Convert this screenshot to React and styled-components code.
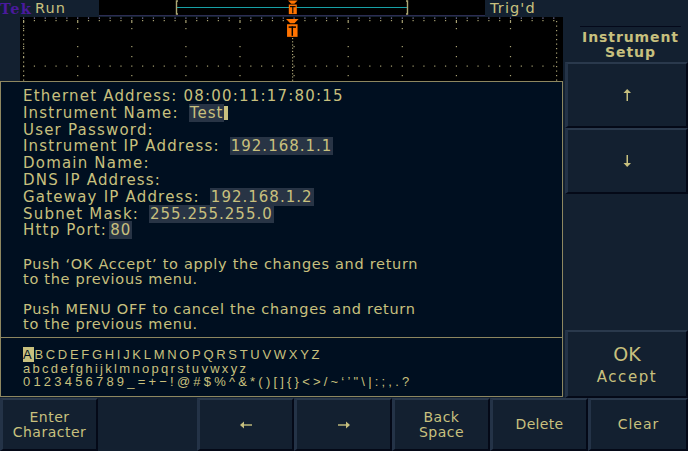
import styled, { createGlobalStyle } from "styled-components";

const KHAKI = "#c8c07e";
const BG = "#132030";
const PANEL = "#000f20";

const Global = createGlobalStyle`
  html, body { margin: 0; padding: 0; background: ${BG}; }
  body { font-family: "DejaVu Sans", sans-serif; }
`;

const Screen = styled.div`
  width: 688px;
  height: 451px;
  background: ${BG};
  display: flex;
  flex-direction: column;
  overflow: hidden;
  color: ${KHAKI};
`;

const Upper = styled.div`
  display: flex;
  height: 398px;
`;

const MainCol = styled.div`
  width: 565px;
  display: flex;
  flex-direction: column;
`;

const TopBar = styled.div`
  height: 17px;
  display: flex;
  align-items: center;
  position: relative;
  z-index: 1;
`;

const Brand = styled.div`
  width: 99px;
  display: flex;
  align-items: center;
  gap: 3px;
`;

const Tek = styled.span`
  font-family: "DejaVu Serif", serif;
  font-weight: bold;
  font-size: 14.5px;
  color: #4a1a9c;
  letter-spacing: 1.2px;
  line-height: 17px;
`;

const Status = styled.span`
  font-size: 14.5px;
  line-height: 17px;
  margin-left: ${(p) => p.$ml || 0}px;
  letter-spacing: 1.1px;
`;

const RecordView = styled.div`
  width: 386px;
  height: 15px;
  background: #000;
  border-bottom: 1px solid #2c2c52;
  position: relative;
  align-self: flex-start;
`;

const Graticule = styled.div`
  margin-left: 20px;
  width: 543px;
  height: 64px;
  background: #000;
`;

const Dialog = styled.div`
  width: 561px;
  height: 314px;
  background: ${PANEL};
  border: 1px solid #8d8760;
  display: flex;
  flex-direction: column;
`;

const Message = styled.div`
  height: 256px;
  border-bottom: 1px solid #8d8760;
  padding: 6px 0 0 22px;
  box-sizing: border-box;
  font-size: 15px;
  letter-spacing: 1.2px;
`;

const Line = styled.div`
  height: 16.8px;
  line-height: 16.8px;
  white-space: pre;
`;

const Field = styled.span`
  background: #283445;
  padding: 0 1px;
  margin-left: ${(p) => (p.$tight ? 2 : 10)}px;
  letter-spacing: 1px;
`;

const Cursor = styled.span`
  display: inline-block;
  width: 4px;
  height: 14px;
  background: ${KHAKI};
  vertical-align: -2px;
`;

const Para = styled.div`
  margin-top: ${(p) => p.$mt}px;
  line-height: 14.8px;
  font-size: 14.5px;
  letter-spacing: 0.7px;
  white-space: pre;
`;

const Chars = styled.div`
  padding: 10px 0 0 22px;
  font-family: "Liberation Sans", sans-serif;
  font-size: 13px;
  line-height: 13.6px;
  white-space: pre;
`;

const CharRow = styled.div`
  letter-spacing: ${(p) => p.$ls}px;
`;

const Sel = styled.span`
  background: ${KHAKI};
  color: ${PANEL};
`;

const SideCol = styled.div`
  width: 123px;
  display: flex;
  flex-direction: column;
`;

const SideHead = styled.div`
  height: 62px;
  display: flex;
  flex-direction: column;
  align-items: center;
  padding-top: 26px;
  box-sizing: border-box;
`;

const Rule = styled.div`
  width: 101px;
  height: 1px;
  background: #04091a;
  margin-left: 8px;
`;

const Title = styled.div`
  font-size: 14px;
  line-height: 15px;
  letter-spacing: 0.9px;
  text-align: center;
  margin: 3px 0 0 8px;
  font-weight: 600;
`;

const Button = styled.div`
  box-sizing: border-box;
  height: ${(p) => p.$h}px;
  background: ${BG};
  border-top: 2px solid #2a394c;
  border-left: 3px solid #243347;
  border-right: 2px solid #040917;
  border-bottom: 2px solid #040917;
  display: flex;
  flex-direction: column;
  align-items: center;
  justify-content: center;
  text-align: center;
  font-size: 14px;
  line-height: 15px;
  letter-spacing: ${(p) => (p.$ls !== undefined ? p.$ls : 0.5)}px;
`;

const SideSpacer = styled.div`
  flex: 1;
`;

const Big = styled.div`
  font-size: 19px;
  line-height: 22px;
  letter-spacing: 0;
`;

const Small = styled.div`
  margin-top: 5px;
  font-size: 15px;
  letter-spacing: 1.6px;
`;

const BottomRow = styled.div`
  height: 53px;
  display: grid;
  grid-template-columns: 98px 99px 97px 98px 98px 98px 100px;
`;

const Blank = styled.div``;

const Arrow = ({ dir }) => (
  <svg width="10" height="12" viewBox="0 0 10 12" fill={KHAKI}>
    {dir === "up" ? (
      <>
        <rect x="4.5" y="2" width="1.5" height="10" />
        <polygon points="5.2,0 9,4 1.5,4" />
      </>
    ) : (
      <>
        <rect x="4.5" y="0" width="1.5" height="10" />
        <polygon points="5.2,12 9,8 1.5,8" />
      </>
    )}
  </svg>
);

const Side = ({ dir }) => (
  <svg width="12" height="8" viewBox="0 0 12 8" fill={KHAKI}>
    {dir === "left" ? (
      <>
        <rect x="3" y="3.3" width="9" height="1.4" />
        <polygon points="0,4 4,0.5 4,7.5" />
      </>
    ) : (
      <>
        <rect x="0" y="3.3" width="9" height="1.4" />
        <polygon points="12,4 8,0.5 8,7.5" />
      </>
    )}
  </svg>
);

const TMark = ({ x, y, s }) => (
  <g transform={`translate(${x},${y}) scale(${s})`}>
    <polygon points="0,0 12,0 8,4 4,4" fill="#ff7300" />
    <rect x="1" y="5" width="10" height="12" fill="#ff7300" />
    <rect x="2.5" y="7" width="7" height="1.4" fill="#000" />
    <rect x="5.3" y="7" width="1.4" height="9" fill="#000" />
  </g>
);

const GratSvg = () => {
  const dots = [];
  for (let i = 0; i <= 50; i++) {
    const x = 3 + i * 10.82;
    dots.push(<rect key={"c" + i} x={x} y={48.5} width="1.2" height="1.2" fill="#a8a274" />);
    dots.push(<rect key={"t" + i} x={x} y={0.5} width="1.2" height="1.2" fill="#8888b8" />);
    if (i % 5 === 0) {
      for (const yy of [11, 29, 39, 58]) {
        dots.push(<rect key={"v" + i + "-" + yy} x={x} y={yy} width="1.2" height="1.2" fill="#a8a274" />);
      }
      dots.push(<rect key={"m" + i} x={x} y={3} width="1.2" height="3" fill="#a8a274" />);
    } else {
      dots.push(<rect key={"s" + i} x={x} y={3} width="1.2" height="1.2" fill="#a8a274" />);
    }
  }
  for (let j = 0; j < 14; j++) {
    dots.push(<rect key={"l" + j} x={3} y={4 + j * 4.5} width="1.2" height="1.2" fill="#a8a274" />);
    dots.push(<rect key={"r" + j} x={536} y={4 + j * 4.5} width="1.2" height="1.2" fill="#a8a274" />);
    dots.push(<rect key={"d" + j} x={272} y={21 + j * 3.2} width="1.2" height="1.2" fill="#a8a274" />);
  }
  return (
    <svg width="543" height="64" viewBox="0 0 543 64">
      {dots}
      <TMark x={266} y={2} s={1.05} />
    </svg>
  );
};

export default function App() {
  return (
    <Screen>
      <Global />
      <Upper>
        <MainCol>
          <TopBar>
            <Brand>
              <Tek>Tek</Tek>
              <Status>Run</Status>
            </Brand>
            <RecordView>
              <svg width="386" height="15" viewBox="0 0 386 15" style={{ position: "absolute", left: 0, top: 0 }}>
                <rect x="77" y="7" width="231" height="1" fill="#17a0a6" />
                <path d="M79 1 H77.5 V14 H79 M307 1 H308.5 V14 H307" stroke="#aea874" strokeWidth="1.4" fill="none" />
                <TMark x={189} y={0.5} s={0.8} />
              </svg>
            </RecordView>
            <Status $ml={5}>Trig'd</Status>
          </TopBar>
          <Graticule>
            <GratSvg />
          </Graticule>
          <Dialog>
            <Message>
              <Line>Ethernet Address: 08:00:11:17:80:15</Line>
              <Line>Instrument Name:<Field>Test</Field><Cursor /></Line>
              <Line>User Password:</Line>
              <Line>Instrument IP Address:<Field>192.168.1.1</Field></Line>
              <Line>Domain Name:</Line>
              <Line>DNS IP Address:</Line>
              <Line>Gateway IP Address:<Field>192.168.1.2</Field></Line>
              <Line>Subnet Mask:<Field>255.255.255.0</Field></Line>
              <Line>Http Port:<Field $tight>80</Field></Line>
              <Para $mt={18}>{"Push ‘OK Accept’ to apply the changes and return\nto the previous menu."}</Para>
              <Para $mt={15}>{"Push MENU OFF to cancel the changes and return\nto the previous menu."}</Para>
            </Message>
            <Chars>
              <CharRow $ls={2.7}><Sel>A</Sel>BCDEFGHIJKLMNOPQRSTUVWXYZ</CharRow>
              <CharRow $ls={2.3}>abcdefghijklmnopqrstuvwxyz</CharRow>
              <CharRow $ls={3.2}>0123456789_=+−!@#$%^&amp;*()[]{"{}"}&lt;&gt;/~‘’"\|:;,.?</CharRow>
            </Chars>
          </Dialog>
        </MainCol>
        <SideCol>
          <SideHead>
            <Rule />
            <Title>Instrument<br />Setup</Title>
          </SideHead>
          <Button $h={66}><Arrow dir="up" /></Button>
          <Button $h={66}><Arrow dir="down" /></Button>
          <SideSpacer />
          <Button $h={68}>
            <Big>OK</Big>
            <Small>Accept</Small>
          </Button>
        </SideCol>
      </Upper>
      <BottomRow>
        <Button $h={53}>Enter<br />Character</Button>
        <Blank />
        <Button $h={53}><Side dir="left" /></Button>
        <Button $h={53}><Side dir="right" /></Button>
        <Button $h={53}>Back<br />Space</Button>
        <Button $h={53} $ls={0.3}>Delete</Button>
        <Button $h={53} $ls={1}>Clear</Button>
      </BottomRow>
    </Screen>
  );
}
